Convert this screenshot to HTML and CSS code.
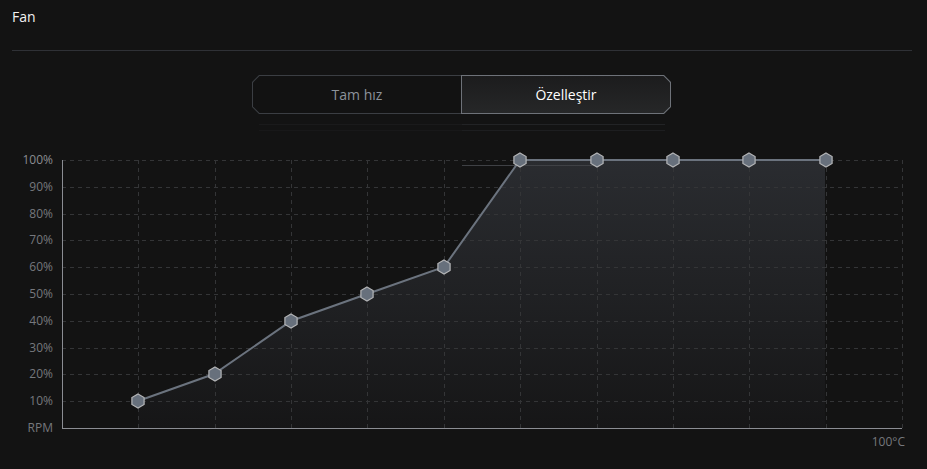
FILE: index.html
```html
<!DOCTYPE html>
<html lang="tr">
<head>
    <meta charset="UTF-8">
    <title>Fan</title>
    <meta name="viewport" content="width=device-width, initial-scale=1.0">
    <link rel="stylesheet" href="styles.css">
</head>
<body>
    <div class="fan-panel">
        <div class="panel-header">
            <div class="panel-title">Fan</div>
        </div>
        <div class="panel-divider"></div>

        <div class="mode-row">
            <div class="mode-switch">
                <div class="mode-seg mode-left">
                    <div class="mode-inner">Tam hız</div>
                </div>
                <div class="mode-seg mode-right active">
                    <div class="mode-inner">Özelleştir</div>
                </div>
            </div>
        </div>
        <div class="mode-shadow">
            <div class="shadow-line"></div>
            <div class="shadow-line faint"></div>
        </div>

        <svg class="fan-chart" viewBox="0 140 927 329" width="927" height="329">
            <defs>
                <linearGradient id="areaFill" x1="0" y1="0" x2="0" y2="1">
                    <stop offset="0%" stop-color="#2a2c30"/>
                    <stop offset="100%" stop-color="#161617"/>
                </linearGradient>
                <symbol id="hex" viewBox="-8 -8 16 16" overflow="visible">
                    <path d="M0 -7 L6.1 -3.5 L6.1 3.5 L0 7 L-6.1 3.5 L-6.1 -3.5 Z" fill="#67707c" stroke="#b4b5b7" stroke-width="1.2"/>
                </symbol>
            </defs>

            <!-- area under curve -->
            <polygon points="138,401 214,374 291,321 367,294 444,267 520,160 825,160 825,428 138,428" fill="url(#areaFill)"/>

            <!-- grid -->
            <g id="grid" stroke="#343537" stroke-width="1" stroke-dasharray="4 4"></g>

            <!-- stray line -->
            <line x1="462" y1="165.5" x2="600" y2="165.5" stroke="#3f4145" stroke-width="1"/>

            <!-- axes -->
            <line x1="62.5" y1="160" x2="62.5" y2="428" stroke="#8b8d93" stroke-width="1"/>
            <line x1="62" y1="428.5" x2="902" y2="428.5" stroke="#8b8d93" stroke-width="1"/>

            <!-- y labels -->
            <g id="ylabels" class="axis-label" text-anchor="end"></g>
            <text class="axis-label" x="905" y="446" text-anchor="end">100°C</text>

            <!-- curve -->
            <polyline points="138,401 214,374 291,321 367,294 444,267 520,160 825,160" fill="none" stroke="#6b737e" stroke-width="2"/>
            <g id="markers"></g>
        </svg>
    </div>

    <script>
        // fan curve points: temperature step index -> percent
        const svgNS = "http://www.w3.org/2000/svg";
        const chartLeft = 62, chartRight = 902, chartTop = 160, chartBottom = 428;
        const stepX = (chartRight - chartLeft) / 11;
        const stepY = (chartBottom - chartTop) / 10;

        const grid = document.getElementById('grid');
        for (let k = 1; k <= 10; k++) {
            const y = Math.round(chartBottom - stepY * k) + 0.5;
            const line = document.createElementNS(svgNS, 'line');
            line.setAttribute('x1', chartLeft); line.setAttribute('x2', chartRight);
            line.setAttribute('y1', y); line.setAttribute('y2', y);
            grid.appendChild(line);
        }
        for (let k = 1; k <= 11; k++) {
            const x = Math.round(chartLeft + stepX * k) + 0.5;
            const line = document.createElementNS(svgNS, 'line');
            line.setAttribute('x1', x); line.setAttribute('x2', x);
            line.setAttribute('y1', chartTop); line.setAttribute('y2', chartBottom);
            grid.appendChild(line);
        }

        const labels = document.getElementById('ylabels');
        const names = ['RPM', '10%', '20%', '30%', '40%', '50%', '60%', '70%', '80%', '90%', '100%'];
        names.forEach(function(name, k) {
            const t = document.createElementNS(svgNS, 'text');
            t.setAttribute('x', 53);
            t.setAttribute('y', Math.round(chartBottom - stepY * k) + 4);
            if (k === 10) t.setAttribute('class', 'top-label');
            t.textContent = name;
            labels.appendChild(t);
        });

        const points = [[1, 10], [2, 20], [3, 40], [4, 50], [5, 60], [6, 100], [7, 100], [8, 100], [9, 100], [10, 100]];
        const markers = document.getElementById('markers');
        points.forEach(function(p) {
            const use = document.createElementNS(svgNS, 'use');
            use.setAttribute('href', '#hex');
            use.setAttribute('x', Math.round(chartLeft + stepX * p[0]) - 8);
            use.setAttribute('y', Math.round(chartBottom - stepY * p[1] / 10) - 8);
            use.setAttribute('width', 16);
            use.setAttribute('height', 16);
            markers.appendChild(use);
        });
    </script>
</body>
</html>
```

FILE: styles.css
```css
* {
    box-sizing: border-box;
}

body {
    margin: 0;
    background: #131313;
    font-family: 'Open Sans', 'Noto Sans', sans-serif;
    color: #fff;
    overflow: hidden;
}

.fan-panel {
    width: 927px;
    height: 469px;
}

.panel-header {
    height: 50px;
    padding: 7px 12px 0;
}

.panel-title {
    font-size: 14px;
    line-height: 20px;
    color: #f2f2f2;
}

.panel-divider {
    height: 1px;
    margin: 0 15px 0 12px;
    background: #2f3136;
}

.mode-row {
    margin-top: 24px;
    display: flex;
    justify-content: center;
    padding-right: 4px;
}

.mode-switch {
    display: flex;
    width: 419px;
    height: 39px;
}

.mode-seg {
    flex: 1;
    padding: 1px;
}

.mode-inner {
    height: 100%;
    display: flex;
    align-items: center;
    justify-content: center;
    font-size: 14px;
}

.mode-left {
    background: #3b3e43;
    padding-right: 0;
    clip-path: polygon(7px 0, 100% 0, 100% 100%, 7px 100%, 0 calc(100% - 7px), 0 7px);
}

.mode-left .mode-inner {
    background: #121212;
    color: #8c939b;
    clip-path: polygon(6.5px 0, 100% 0, 100% 100%, 6.5px 100%, 0 calc(100% - 6.5px), 0 6.5px);
}

.mode-right {
    background: #6e7279;
    clip-path: polygon(0 0, calc(100% - 7px) 0, 100% 7px, 100% calc(100% - 7px), calc(100% - 7px) 100%, 0 100%);
}

.mode-right .mode-inner {
    background: linear-gradient(180deg, #1c1c1d 0%, #262728 100%);
    color: #ffffff;
    clip-path: polygon(0 0, calc(100% - 6.5px) 0, 100% 6.5px, 100% calc(100% - 6.5px), calc(100% - 6.5px) 100%, 0 100%);
}

.mode-shadow {
    height: 26px;
    padding-top: 10px;
    display: flex;
    flex-direction: column;
    align-items: center;
    gap: 5px;
}

.shadow-line {
    width: 406px;
    height: 1px;
    margin-right: 4px;
    background: linear-gradient(90deg, #1a1a1b 50%, #222325 50%);
}

.shadow-line.faint {
    background: linear-gradient(90deg, #181819 50%, #1d1e20 50%);
}

.fan-chart {
    display: block;
}

.axis-label {
    font-family: 'Open Sans', 'Noto Sans', sans-serif;
    font-size: 12px;
    fill: #76787d;
}

.axis-label .top-label {
    fill: #8a8c91;
}
```
